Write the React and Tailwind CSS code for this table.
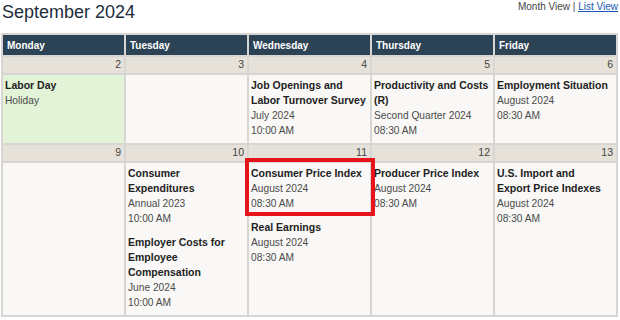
import React from "react";

const days = ["Monday", "Tuesday", "Wednesday", "Thursday", "Friday"];

const weeks = [
  {
    dates: [2, 3, 4, 5, 6],
    cells: [
      { green: true, events: [{ title: ["Labor Day"], lines: ["Holiday"] }] },
      { events: [] },
      {
        events: [
          { title: ["Job Openings and", "Labor Turnover Survey"], lines: ["July 2024", "10:00 AM"] },
        ],
      },
      {
        events: [
          { title: ["Productivity and Costs", "(R)"], lines: ["Second Quarter 2024", "08:30 AM"] },
        ],
      },
      {
        events: [{ title: ["Employment Situation"], lines: ["August 2024", "08:30 AM"] }],
      },
    ],
  },
  {
    dates: [9, 10, 11, 12, 13],
    cells: [
      { events: [] },
      {
        events: [
          { title: ["Consumer", "Expenditures"], lines: ["Annual 2023", "10:00 AM"] },
          { title: ["Employer Costs for", "Employee", "Compensation"], lines: ["June 2024", "10:00 AM"] },
        ],
      },
      {
        events: [
          { title: ["Consumer Price Index"], lines: ["August 2024", "08:30 AM"], boxed: true },
          { title: ["Real Earnings"], lines: ["August 2024", "08:30 AM"] },
        ],
      },
      {
        events: [{ title: ["Producer Price Index"], lines: ["August 2024", "08:30 AM"] }],
      },
      {
        events: [
          { title: ["U.S. Import and", "Export Price Indexes"], lines: ["August 2024", "08:30 AM"] },
        ],
      },
    ],
  },
];

function Event({ ev }) {
  return (
    <div className="relative">
      {ev.title.map((t, i) => (
        <div key={i} className="whitespace-nowrap font-bold text-[10.5px] leading-[15px] text-[#222]">
          {t}
        </div>
      ))}
      {ev.lines.map((t, i) => (
        <div key={i} className="whitespace-nowrap text-[10.2px] leading-[15px] text-[#4a4a4a]">
          {t}
        </div>
      ))}
      {ev.boxed && (
        <span className="pointer-events-none absolute -left-[6px] -top-[8px] -right-[7px] -bottom-[5px] z-10 border-4 border-[#e8141c]"></span>
      )}
    </div>
  );
}

export default function App() {
  return (
    <div className="w-[620px] h-[320px] overflow-hidden bg-white font-['Liberation_Sans',Arial,sans-serif]">
      <div className="flex h-[33px] items-start justify-between pl-[2px] pr-[2px]">
        <h1 className="mt-[1px] text-[18px] leading-[22px] text-[#1d2d3d]">September 2024</h1>
        <div className="mt-[1px] text-[10px] leading-[12px] text-[#444]">
          Month View | <span className="text-[#1a55b0] underline">List View</span>
        </div>
      </div>
      <div className="ml-[1px] grid w-[617px] grid-cols-5 gap-[2px] bg-[#d7d6d3] p-[2px]">
        {days.map((d) => (
          <div
            key={d}
            className="flex h-[20px] items-center bg-[#2c4356] pl-[4px] text-[10px] font-bold text-white"
          >
            {d}
          </div>
        ))}
        {weeks.map((w, wi) => (
          <React.Fragment key={wi}>
            {w.dates.map((n) => (
              <div
                key={"d" + n}
                className="flex h-[16px] items-center justify-end bg-[#e7e2d9] pr-[3px] text-[10.5px] text-[#444]"
              >
                {n}
              </div>
            ))}
            {w.cells.map((c, ci) => (
              <div
                key={"c" + ci}
                className={
                  "relative flex flex-col gap-[9px] pb-[5px] pl-[2px] pr-[2px] pt-[3px] " +
                  (c.green ? "bg-[#e2f3d7]" : "bg-[#f9f8f6]")
                }
              >
                {c.events.map((ev, ei) => (
                  <Event key={ei} ev={ev} />
                ))}
              </div>
            ))}
          </React.Fragment>
        ))}
      </div>
    </div>
  );
}
